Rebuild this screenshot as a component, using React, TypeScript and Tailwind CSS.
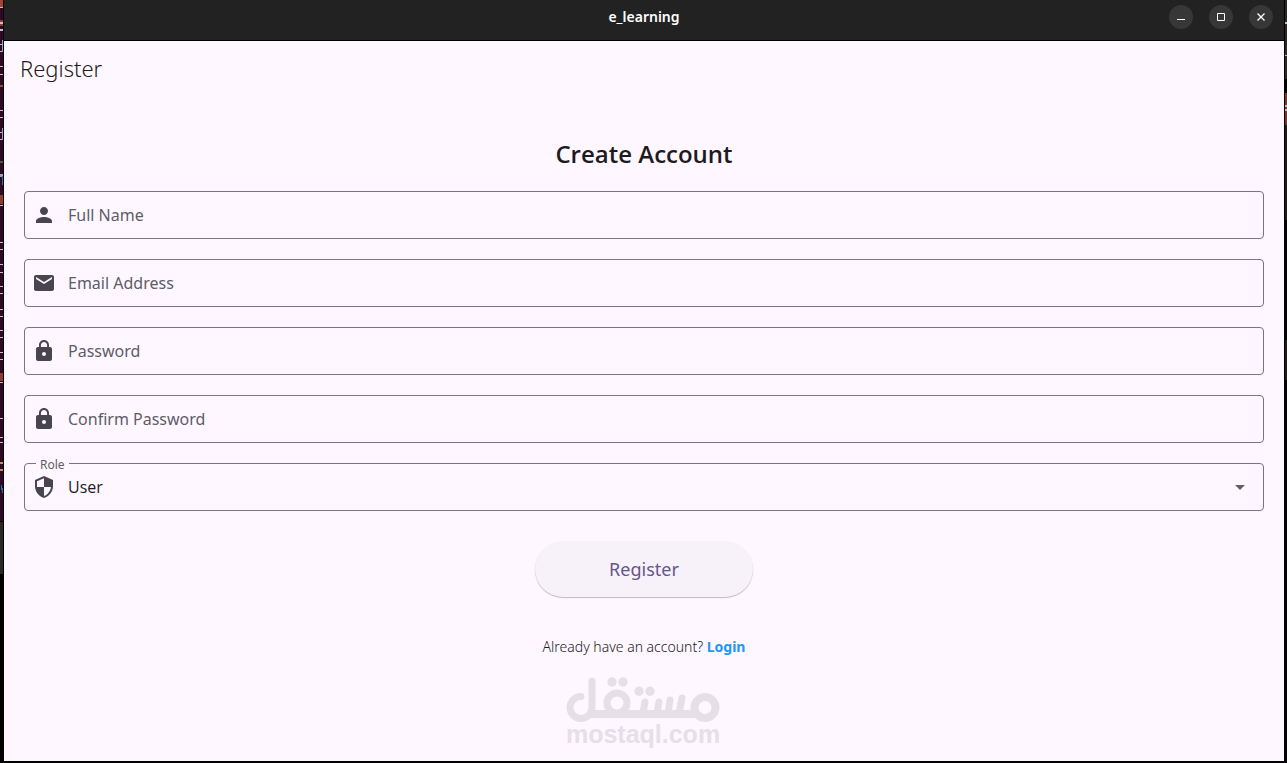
import { MdArrowDropDown, MdEmail, MdLock, MdPerson, MdSecurity } from "react-icons/md"

const fields = [
  { id: "name", label: "Full Name", type: "text", icon: MdPerson },
  { id: "email", label: "Email Address", type: "email", icon: MdEmail },
  { id: "password", label: "Password", type: "password", icon: MdLock },
  { id: "confirm", label: "Confirm Password", type: "password", icon: MdLock },
]

// Slivers of the terminal window that sits behind the app
const leftBits = [
  [0, 7, "#a34532"], [7, 1, "#c9bfc6"], [20, 6, "#8c3c30"], [22, 2, "#c9bfc6"], [29, 2, "#c9bfc6"],
  [44, 1, "#c9bfc6"], [51, 1, "#c9bfc6"], [66, 1, "#c9bfc6"], [74, 1, "#c9bfc6"],
  [85, 2, "#a34532"], [110, 1, "#c9bfc6"], [117, 1, "#c9bfc6"], [132, 1, "#c9bfc6"],
  [139, 1, "#c9bfc6"], [161, 2, "#555753"], [174, 3, "#8fa6c4"], [195, 9, "#8c3c30"],
  [205, 1, "#c9bfc6"], [242, 1, "#c9bfc6"], [249, 1, "#c9bfc6"], [264, 1, "#c9bfc6"],
  [272, 1, "#c9bfc6"], [286, 1, "#c9bfc6"], [293, 1, "#c9bfc6"], [309, 1, "#c9bfc6"],
  [316, 1, "#c9bfc6"], [330, 1, "#c9bfc6"], [337, 1, "#c9bfc6"], [352, 1, "#c9bfc6"],
  [359, 1, "#c9bfc6"], [373, 8, "#8c3c30"], [382, 1, "#c9bfc6"], [418, 1, "#c9bfc6"],
  [437, 1, "#c9bfc6"], [442, 1, "#c9bfc6"], [462, 2, "#c98a5a"], [469, 2, "#c98a5a"],
] as const

function WindowButtons() {
  const button = "flex size-6 items-center justify-center rounded-full bg-[#373737] text-white"

  return (
    <div className="flex items-center justify-end gap-4 pr-[11px]">
      <button type="button" aria-label="Minimize" className={button}>
        <svg className="size-4" viewBox="0 0 16 16">
          <path d="M4 10h8v1H4z" fill="currentColor" />
        </svg>
      </button>
      <button type="button" aria-label="Maximize" className={button}>
        <svg className="size-4" viewBox="0 0 16 16">
          <path d="M4.5 4.5h7v7h-7z" fill="none" stroke="currentColor" />
        </svg>
      </button>
      <button type="button" aria-label="Close" className={button}>
        <svg className="size-4" viewBox="0 0 16 16">
          <path d="M4.5 4.5l7 7m0-7l-7 7" fill="none" stroke="currentColor" strokeWidth="1.3" />
        </svg>
      </button>
    </div>
  )
}

function MostaqlLogo() {
  return (
    <svg className="h-[76px] w-[160px]" viewBox="-2 0 160 76" role="img" aria-label="mostaql.com">
      <g fill="none" stroke="#e5e0e7" strokeWidth="8" strokeLinecap="round">
        <path d="M15 20.500A11 11 0 1 0 26 31.500V5" strokeWidth="7" />
        <path d="M22 38H132" strokeLinecap="butt" />
        <circle cx="51" cy="27" r="10" strokeWidth="7" />
        <circle cx="139" cy="31.500" r="10.500" />
        <path d="M79 26L77 37M93 26L91 37M104 24L102 37M116 22L113 37" strokeWidth="7" />
      </g>
      <g fill="#e5e0e7">
        <circle cx="46" cy="6" r="4.700" />
        <circle cx="57" cy="6" r="4.700" />
        <circle cx="73" cy="15.300" r="4.700" />
        <circle cx="84" cy="15.300" r="4.700" />
        <text x="77" y="67" textAnchor="middle" fontSize="25" fontWeight="700" fontFamily="Liberation Sans, sans-serif">
          mostaql.com
        </text>
      </g>
    </svg>
  )
}

export default function App() {
  return (
    <div className="grid min-h-screen grid-cols-[4px_1fr_3px] bg-black pb-[2px] font-['Noto_Sans','Open_Sans',sans-serif] text-[#1d1b20]">
      <div className="overflow-hidden" aria-hidden="true">
        <svg className="h-[575px] w-1" viewBox="0 0 4 575">
          <path d="M0 0h3v521H0z" fill="#300a24" />
          <path d="M0 522h3v52H0z" fill="#2a2826" />
          {leftBits.map(([y, height, color]) => (
            <rect key={y} x="0" y={y} width="3" height={height} fill={color} />
          ))}
          <path d="M2.500 40v12M2.500 128v12" stroke="#8fa6c4" />
          <path d="M2.500 176v9M1.500 485v5M2.500 488v5" stroke="#2a6fb0" />
        </svg>
      </div>

      <div className="flex flex-col bg-[#fef7ff]">
        {/* Title bar */}
        <header className="grid h-[41px] grid-cols-3 border-b border-black bg-[#222222] pb-[7px]">
          <span className="col-start-2 self-center text-center text-sm font-semibold text-white">e_learning</span>
          <WindowButtons />
        </header>

        {/* App bar */}
        <div className="flex h-14 items-start px-4 pt-[13px]">
          <h1 className="text-[22px] leading-7 font-light">Register</h1>
        </div>

        <main className="flex flex-col px-5 pt-10">
          <h2 className="mb-5 text-center font-['Open_Sans',sans-serif] text-2xl leading-[34px] font-semibold">
            Create Account
          </h2>

          <form className="flex flex-col gap-5">
            {fields.map(({ id, label, type, icon: Icon }) => (
              <div key={id} className="flex h-12 items-center rounded border border-[#79747e] pl-[7px]">
                <label htmlFor={id} className="mr-3 text-[#49454f]">
                  <Icon className="size-6" title={label} />
                </label>
                <input
                  id={id}
                  type={type}
                  placeholder={label}
                  className="h-full min-w-0 flex-1 bg-transparent text-base outline-none placeholder:text-[#605c66]"
                />
              </div>
            ))}

            <div className="relative flex h-12 items-center rounded border border-[#79747e] pl-[7px] text-[#49454f]">
              <label htmlFor="role" className="absolute -top-[7px] left-[11px] bg-[#fef7ff] px-1 text-xs leading-4 text-[#605c66]">
                Role
              </label>
              <MdSecurity className="mr-3 size-6" />
              <select id="role" className="h-full min-w-0 flex-1 appearance-none bg-transparent font-['Open_Sans',sans-serif] text-base text-[#1d1b20] outline-none">
                <option>User</option>
                <option>Instructor</option>
              </select>
              <MdArrowDropDown className="pointer-events-none absolute right-[11px] size-6 text-[#616161]" />
            </div>

            <button
              type="submit"
              className="mt-[10px] h-14 self-center rounded-full bg-[#f7f2fa] px-[74px] text-lg text-[#65558f] shadow-[0_1px_1px_rgba(0,0,0,0.25)]"
            >
              Register
            </button>
          </form>

          <p className="mt-10 text-center text-sm leading-5 font-light">
            Already have an account?{" "}
            <a href="#login" className="font-bold text-[#2196f3]">
              Login
            </a>
          </p>
        </main>

        <div className="mt-[19px] flex justify-center">
          <MostaqlLogo />
        </div>
      </div>

      <div className="overflow-hidden" aria-hidden="true">
        <svg className="h-[400px] w-[3px]" viewBox="0 0 3 400">
          <path d="M1 0h2v79H1z" fill="#2a2826" />
          <path d="M1 93h2v32H1z" fill="#7d3128" />
          <path d="M1 125h2v95H1z" fill="#1c1b1a" />
          <path d="M1 340h2v40H1z" fill="#1c1b1a" />
          <path d="M1 22h2v2H1zM1 55h2v1H1zM1 105h2v2H1zM1 109h2v2H1z" fill="#c9bfc6" />
        </svg>
      </div>
    </div>
  )
}
